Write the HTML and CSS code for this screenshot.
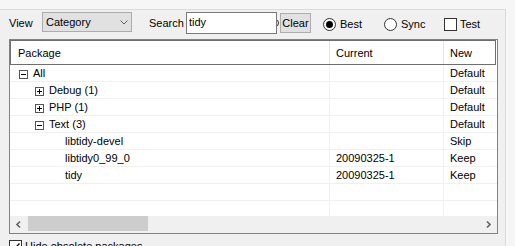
FILE: index.html
```html
<!DOCTYPE html>
<html lang="en">
<head>
    <meta charset="UTF-8" />
    <title>Select packages</title>
    <link rel="stylesheet" href="styles.css">
</head>
<body>
    <div class="panel">
        <div class="toolbar">
            <span class="lbl lbl-view">View</span>
            <div class="select">
                <span>Category</span>
                <svg width="8" height="5" viewBox="0 0 8 5"><path d="M0.5 0.5 L4 4 L7.5 0.5" fill="none" stroke="#606060" stroke-width="1"/></svg>
            </div>
            <span class="lbl lbl-search">Search</span>
            <div class="search">tidy</div>
            <svg class="arc" width="3" height="22" viewBox="0 0 3 22"><path d="M0.5 8 Q2.5 11 0.5 14" fill="none" stroke="#333" stroke-width="1"/></svg>
            <button class="btn">Clear</button>
            <label class="opt opt-best"><span class="radio on"></span>Best</label>
            <label class="opt opt-sync"><span class="radio"></span>Sync</label>
            <label class="opt"><span class="check"></span>Test</label>
        </div>

        <div class="list">
            <div class="head">
                <div class="cell">Package</div>
                <div class="cell">Current</div>
                <div class="cell">New</div>
            </div>
            <div class="rows">
                <div class="row">
                    <div class="cell tree lvl0"><svg class="exp" width="9" height="9" viewBox="0 0 9 9"><rect x="0.5" y="0.5" width="8" height="8" fill="#fff" stroke="#555"/><path d="M2 4.5 H7" stroke="#000"/></svg>All</div>
                    <div class="cell"></div>
                    <div class="cell">Default</div>
                </div>
                <div class="row">
                    <div class="cell tree lvl1"><svg class="exp" width="9" height="9" viewBox="0 0 9 9"><rect x="0.5" y="0.5" width="8" height="8" fill="#fff" stroke="#555"/><path d="M2 4.5 H7 M4.5 2 V7" stroke="#000"/></svg>Debug (1)</div>
                    <div class="cell"></div>
                    <div class="cell">Default</div>
                </div>
                <div class="row">
                    <div class="cell tree lvl1"><svg class="exp" width="9" height="9" viewBox="0 0 9 9"><rect x="0.5" y="0.5" width="8" height="8" fill="#fff" stroke="#555"/><path d="M2 4.5 H7 M4.5 2 V7" stroke="#000"/></svg>PHP (1)</div>
                    <div class="cell"></div>
                    <div class="cell">Default</div>
                </div>
                <div class="row">
                    <div class="cell tree lvl1"><svg class="exp" width="9" height="9" viewBox="0 0 9 9"><rect x="0.5" y="0.5" width="8" height="8" fill="#fff" stroke="#555"/><path d="M2 4.5 H7" stroke="#000"/></svg>Text (3)</div>
                    <div class="cell"></div>
                    <div class="cell">Default</div>
                </div>
                <div class="row">
                    <div class="cell tree lvl2"><span class="leaf"></span>libtidy-devel</div>
                    <div class="cell"></div>
                    <div class="cell">Skip</div>
                </div>
                <div class="row">
                    <div class="cell tree lvl2"><span class="leaf"></span>libtidy0_99_0</div>
                    <div class="cell">20090325-1</div>
                    <div class="cell">Keep</div>
                </div>
                <div class="row">
                    <div class="cell tree lvl2"><span class="leaf"></span>tidy</div>
                    <div class="cell">20090325-1</div>
                    <div class="cell">Keep</div>
                </div>
                <div class="row">
                    <div class="cell"></div>
                    <div class="cell"></div>
                    <div class="cell"></div>
                </div>
                <div class="row">
                    <div class="cell"></div>
                    <div class="cell"></div>
                    <div class="cell"></div>
                </div>
            </div>
            <div class="hscroll">
                <span class="arrow"><svg width="17" height="17" viewBox="0 0 17 17"><path d="M10 5.5 L7 8.5 L10 11.5" fill="none" stroke="#606060" stroke-width="1.6"/></svg></span>
                <span class="thumb"></span>
                <span class="arrow arrow-right"><svg width="17" height="17" viewBox="0 0 17 17"><path d="M7 5.5 L10 8.5 L7 11.5" fill="none" stroke="#606060" stroke-width="1.6"/></svg></span>
            </div>
        </div>

        <label class="hide"><span class="check checked"><svg width="11" height="11" viewBox="0 0 11 11"><path d="M1.5 5.5 L4 8 L9.5 2.5" fill="none" stroke="#000" stroke-width="1.3"/></svg></span>Hide obsolete packages</label>
    </div>
</body>
</html>
```

FILE: styles.css
```css
* {
    box-sizing: border-box;
}
body {
    margin: 0;
    background-color: #f6f6f6;
    font-family: "Liberation Sans", Arial, sans-serif;
    font-size: 11px;
    color: #000;
    overflow: hidden;
}
.panel {
    margin-top: 9px;
    width: 506px;
    height: 237px;
    border-top: 1px solid #dadada;
    border-right: 1px solid #dadada;
    background-color: #f0f0f0;
    padding: 1px 0 0 9px;
}
.toolbar {
    display: flex;
    align-items: center;
    height: 24px;
}
.lbl-view {
    width: 33px;
}
.lbl-search {
    width: 37px;
}
.select {
    width: 90px;
    height: 20px;
    margin: 0 17px 2px 0;
    border: 1px solid #adadad;
    background-color: #e1e1e1;
    display: flex;
    align-items: center;
    justify-content: space-between;
    padding: 0 3px 0 3px;
}
.search {
    width: 91px;
    height: 22px;
    border: 1px solid #7a7a7a;
    background-color: #fff;
    padding: 0 0 2px 2px;
    display: flex;
    align-items: center;
}
.btn {
    width: 31px;
    height: 20px;
    border: 1px solid #adadad;
    background-color: #e1e1e1;
    font: inherit;
    color: #000;
    padding: 0;
}
.opt {
    display: flex;
    align-items: center;
    padding-top: 2px;
}
.opt-best {
    margin-left: 12px;
    width: 61px;
}
.opt-sync {
    width: 60px;
}
.radio {
    width: 13px;
    height: 13px;
    margin-right: 4px;
    border: 1px solid #333;
    border-radius: 50%;
    background-color: #fff;
    display: flex;
    align-items: center;
    justify-content: center;
}
.radio.on::after {
    content: "";
    width: 7px;
    height: 7px;
    border-radius: 50%;
    background-color: #000;
}
.check {
    width: 13px;
    height: 13px;
    margin-right: 3px;
    border: 1px solid #333;
    background-color: #fff;
    display: flex;
    align-items: center;
    justify-content: center;
}
.list {
    margin-top: 4px;
    width: 489px;
    height: 195px;
    border: 1px solid #828282;
    background-color: #fff;
    display: flex;
    flex-direction: column;
}
.head {
    height: 25px;
    margin-right: 1px;
    border: 1px solid #6e6e6e;
    display: grid;
    grid-template-columns: 319px 114px 1fr;
    flex-shrink: 0;
}
.head .cell {
    border-right: 1px solid #e5e5e5;
    padding-left: 6px;
    display: flex;
    align-items: center;
}
.head .cell:first-child {
    padding-left: 7px;
}
.head .cell:last-child {
    border-right: none;
}
.rows {
    height: 151px;
    overflow: hidden;
    flex-shrink: 0;
}
.row {
    display: grid;
    grid-template-columns: 320px 114px 1fr;
    height: 17px;
    border-bottom: 1px solid #f0f0f0;
}
.row .cell {
    border-right: 1px solid #f0f0f0;
    padding-left: 6px;
    display: flex;
    align-items: center;
    white-space: nowrap;
}
.row .cell:last-child {
    border-right: none;
}
.row .tree {
    padding-left: 9px;
}
.row .lvl1 {
    padding-left: 25px;
}
.row .lvl2 {
    padding-left: 41px;
}
.exp {
    margin: 2px 5px 0 0;
    flex-shrink: 0;
}
.leaf {
    width: 14px;
    flex-shrink: 0;
}
.hscroll {
    height: 17px;
    background-color: #f0f0f0;
    display: flex;
    flex-shrink: 0;
}
.arrow {
    width: 17px;
    height: 17px;
}
.arrow svg {
    display: block;
}
.thumb {
    margin-left: 1px;
    width: 120px;
    height: 15px;
    background-color: #cdcdcd;
}
.arrow-right {
    margin-left: auto;
}
.hide {
    margin-top: 6px;
    display: flex;
    align-items: flex-start;
    line-height: 12px;
}
.hide .check {
    margin-right: 3px;
}
```
